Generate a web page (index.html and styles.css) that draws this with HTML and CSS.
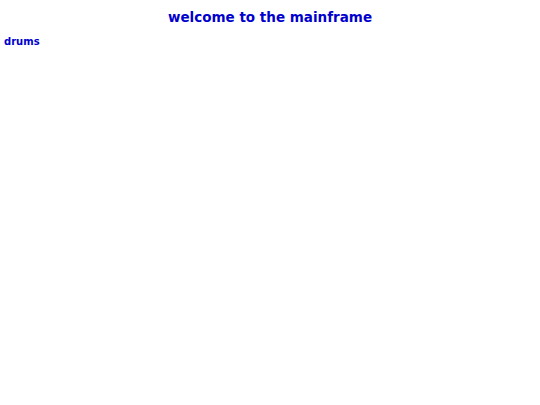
FILE: index.html
```html
<!DOCTYPE html>
<html>
<head>
<meta charset="utf-8">
<link rel="stylesheet" href="styles.css">
</head>
<body>
<h1 class="title">welcome to the mainframe</h1>
<div class="item">drums</div>
</body>
</html>
```

FILE: styles.css
```css
html, body {
  margin: 0;
  padding: 0;
  background: #ffffff;
}
body {
  font-family: "DejaVu Sans", Verdana, sans-serif;
  color: #0000cd;
  padding: 9px 4px;
}
.title {
  margin: 0;
  font-size: 13.5px;
  font-weight: bold;
  text-align: center;
  line-height: 16px;
}
.item {
  margin-top: 11px;
  font-size: 10px;
  font-weight: bold;
  line-height: 12px;
}
```
